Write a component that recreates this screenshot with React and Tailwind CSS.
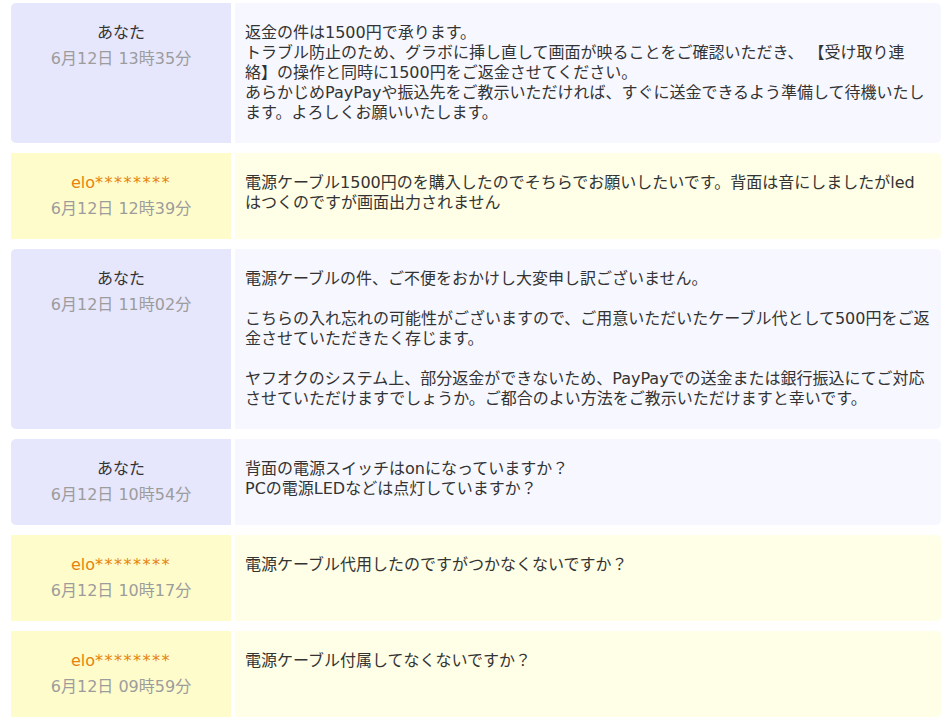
const messages = [
  {
    me: true,
    name: "あなた",
    date: "6月12日 13時35分",
    lines: [
      "返金の件は1500円で承ります。",
      "トラブル防止のため、グラボに挿し直して画面が映ることをご確認いただき、 【受け取り連",
      "絡】の操作と同時に1500円をご返金させてください。",
      "あらかじめPayPayや振込先をご教示いただければ、すぐに送金できるよう準備して待機いたし",
      "ます。よろしくお願いいたします。",
    ],
  },
  {
    me: false,
    name: "elo",
    date: "6月12日 12時39分",
    lines: [
      "電源ケーブル1500円のを購入したのでそちらでお願いしたいです。背面は音にしましたがled",
      "はつくのですが画面出力されません",
    ],
  },
  {
    me: true,
    name: "あなた",
    date: "6月12日 11時02分",
    lines: [
      "電源ケーブルの件、ご不便をおかけし大変申し訳ございません。",
      "",
      "こちらの入れ忘れの可能性がございますので、ご用意いただいたケーブル代として500円をご返",
      "金させていただきたく存じます。",
      "",
      "ヤフオクのシステム上、部分返金ができないため、PayPayでの送金または銀行振込にてご対応",
      "させていただけますでしょうか。ご都合のよい方法をご教示いただけますと幸いです。",
    ],
  },
  {
    me: true,
    name: "あなた",
    date: "6月12日 10時54分",
    lines: ["背面の電源スイッチはonになっていますか？", "PCの電源LEDなどは点灯していますか？"],
  },
  {
    me: false,
    name: "elo",
    date: "6月12日 10時17分",
    lines: ["電源ケーブル代用したのですがつかなくないですか？"],
  },
  {
    me: false,
    name: "elo",
    date: "6月12日 09時59分",
    lines: ["電源ケーブル付属してなくないですか？"],
  },
];

function Message({ msg }) {
  return (
    <div className="flex gap-1">
      <div
        className={
          msg.me
            ? "w-[220px] shrink-0 bg-[#e6e6fd] rounded-l-[5px] py-[17px] text-center leading-[26px]"
            : "w-[220px] shrink-0 bg-[#fffccc] py-[17px] text-center leading-[26px]"
        }
      >
        {msg.me ? (
          <div className="text-[#333333]">{msg.name}</div>
        ) : (
          <div className="text-[#e5830b]">
            {msg.name}
            <span className="tracking-[1.5px]">********</span>
          </div>
        )}
        <div className="text-[#9c9c9c]">{msg.date}</div>
      </div>
      <div
        className={
          msg.me
            ? "flex-1 bg-[#f6f7ff] rounded-r-[5px] py-5 pl-[10px] pr-2 leading-5 text-[#333333] whitespace-nowrap"
            : "flex-1 bg-[#fffee6] rounded-r-[5px] py-5 pl-[10px] pr-2 leading-5 text-[#333333] whitespace-nowrap"
        }
      >
        {msg.lines.map((line, i) => (
          <div key={i} className="h-5">
            {line}
          </div>
        ))}
      </div>
    </div>
  );
}

export default function App() {
  return (
    <div
      className="bg-white min-h-screen pl-[11px] pr-[5px] pt-[3px] text-[16px]"
      style={{ fontFamily: '"DejaVu Sans", "Noto Sans CJK JP", sans-serif' }}
    >
      <div className="flex flex-col gap-[10px]">
        {messages.map((m, i) => (
          <Message key={i} msg={m} />
        ))}
      </div>
    </div>
  );
}
